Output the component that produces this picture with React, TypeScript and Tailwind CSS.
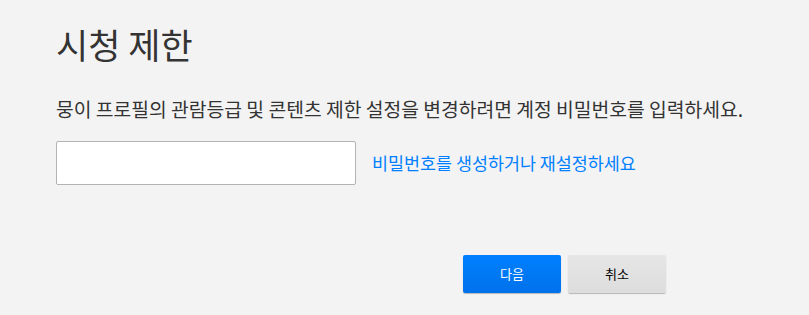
import React from 'react';

export default function App() {
    return (
        <div
            className="w-[809px] h-[315px] bg-[#f3f3f3] text-[#333] pl-[56px] pt-[20px] overflow-hidden"
            style={{ fontFamily: '"Noto Sans CJK KR", "Noto Sans", sans-serif' }}
        >
            <h1 className="text-[35px] leading-[48px] font-normal text-[#333]">시청 제한</h1>
            <p className="mt-[28px] text-[19.3px] leading-[26px] text-[#333]">
                뭉이 프로필의 관람등급 및 콘텐츠 제한 설정을 변경하려면 계정 비밀번호를 입력하세요.
            </p>
            <div className="mt-[19px] flex items-center gap-[16px]">
                <input
                    type="password"
                    className="w-[300px] h-[44px] bg-white border border-[#b3b3b3] rounded-[2px] outline-none px-3"
                />
                <a href="#" className="text-[17.4px] text-[#0080ff] leading-[22px]">
                    비밀번호를 생성하거나 재설정하세요
                </a>
            </div>
            <div className="mt-[70px] flex gap-[7px] pl-[407px]">
                <button className="w-[98px] h-[38px] rounded-[2px] bg-gradient-to-b from-[#0080ff] to-[#0071eb] text-white text-[13px] shadow-[0_1px_1px_rgba(0,0,0,0.25)]">
                    다음
                </button>
                <button className="w-[98px] h-[38px] rounded-[2px] bg-gradient-to-b from-[#e6e6e6] to-[#dddddd] text-black text-[13px] shadow-[0_1px_1px_rgba(0,0,0,0.25)]">
                    취소
                </button>
            </div>
        </div>
    );
}
